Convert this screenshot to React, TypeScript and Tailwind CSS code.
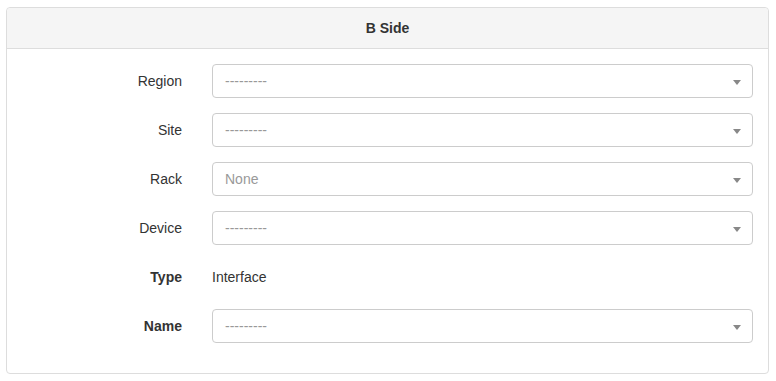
import React from 'react';

const SelectBox = ({ value }: { value: string }) => (
  <div className="relative h-[34px] rounded border border-[#ccc] bg-white px-3 flex items-center">
    <span className="text-[14px] text-[#999]">{value}</span>
    <span className="absolute right-[11px] top-[15px] w-0 h-0 border-l-[4px] border-r-[4px] border-t-[5px] border-l-transparent border-r-transparent border-t-[#888]" />
  </div>
);

const Row = ({ label, bold, children }: { label: string; bold?: boolean; children: React.ReactNode }) => (
  <div className="flex mb-[15px]">
    <label className={`w-[175px] pr-[15px] text-right pt-[7px] leading-[20px] ${bold ? 'font-bold' : ''}`}>{label}</label>
    <div className="flex-1 pl-[15px]">{children}</div>
  </div>
);

export default function App() {
  return (
    <div className="bg-white w-[776px] h-[381px] pt-[7px] pl-[6px] pr-[7px] text-[14px] text-[#333]" style={{ fontFamily: '"Liberation Sans", Arial, sans-serif' }}>
      <div className="border border-[#ddd] rounded bg-white">
        <div className="bg-[#f5f5f5] border-b border-[#ddd] rounded-t py-[10px] px-[15px] text-center font-bold leading-[20px]">
          B Side
        </div>
        <div className="p-[15px]">
          <Row label="Region"><SelectBox value="---------" /></Row>
          <Row label="Site"><SelectBox value="---------" /></Row>
          <Row label="Rack"><SelectBox value="None" /></Row>
          <Row label="Device"><SelectBox value="---------" /></Row>
          <Row label="Type" bold>
            <div className="pt-[7px] pb-[7px] leading-[20px]">Interface</div>
          </Row>
          <Row label="Name" bold><SelectBox value="---------" /></Row>
        </div>
      </div>
    </div>
  );
}
